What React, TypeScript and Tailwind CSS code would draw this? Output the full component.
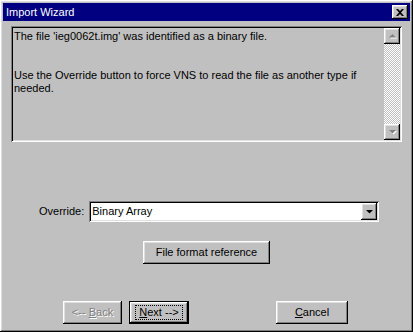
import React from "react";

const raised =
  "shadow-[inset_-1px_-1px_0_#000,inset_1px_1px_0_#fff,inset_-2px_-2px_0_#808080,inset_2px_2px_0_#dfdfdf]";
const sunken =
  "shadow-[inset_1px_1px_0_#808080,inset_-1px_-1px_0_#fff,inset_2px_2px_0_#000,inset_-2px_-2px_0_#dfdfdf]";

function Arrow({ down = false, disabled = false }: { down?: boolean; disabled?: boolean }) {
  const pts = down ? "1,1 8,1 4.5,4.5" : "1,4.5 8,4.5 4.5,1";
  return (
    <svg width="9" height="6" viewBox="0 0 9 6">
      {disabled && (
        <polygon points={pts} fill="#fff" transform="translate(1,1)" />
      )}
      <polygon points={pts} fill={disabled ? "#808080" : "#000"} />
    </svg>
  );
}

function Button({
  children,
  className = "",
  isDefault = false,
  disabled = false,
}: {
  children: React.ReactNode;
  className?: string;
  isDefault?: boolean;
  disabled?: boolean;
}) {
  return (
    <div
      className={`flex items-center justify-center h-[23px] bg-[#c0c0c0] ${
        isDefault ? "border border-black" : ""
      } ${className}`}
    >
      <div className={`flex h-full w-full items-center justify-center ${raised}`}>
        {isDefault ? (
          <span className="border border-dotted border-black px-[3px] leading-[13px]">
            {children}
          </span>
        ) : (
          <span
            className={
              disabled ? "text-[#808080] [text-shadow:1px_1px_0_#fff]" : "text-black"
            }
          >
            {children}
          </span>
        )}
      </div>
    </div>
  );
}

export default function App() {
  return (
    <div className="w-[413px] h-[332px] bg-[#c0c0c0] text-[11px] text-black font-['Liberation_Sans',Arial,sans-serif]">
      <div className={`flex h-full w-full flex-col p-[3px] ${raised}`}>
        {/* title bar */}
        <div className="flex h-[18px] items-center justify-between bg-[#000080] pl-[3px] pr-[2px]">
          <span className="text-white text-[11px] leading-none">Import Wizard</span>
          <div
            className={`flex h-[14px] w-[16px] items-center justify-center bg-[#c0c0c0] ${raised}`}
          >
            <svg width="8" height="7" viewBox="0 0 8 7">
              <path d="M0 0h2l2 2 2-2h2L5 3.5 8 7H6L4 5 2 7H0l3-3.5z" fill="#000" />
            </svg>
          </div>
        </div>

        {/* message box */}
        <div className={`mx-[8px] mt-[5px] flex h-[116px] p-[2px] ${sunken}`}>
          <div className="flex-1 pl-[1px] pt-[2px] leading-[13px]">
            <p>The file 'ieg0062t.img' was identified as a binary file.</p>
            <p className="mt-[26px]">
              Use the Override button to force VNS to read the file as another type if needed.
            </p>
          </div>
          <div className="flex w-[16px] flex-col">
            <div className={`flex h-[16px] items-center justify-center bg-[#c0c0c0] ${raised}`}>
              <Arrow disabled />
            </div>
            <div className="flex-1 bg-[repeating-conic-gradient(#c0c0c0_0%_25%,#fff_0%_50%)] bg-[length:2px_2px]" />
            <div className={`flex h-[16px] items-center justify-center bg-[#c0c0c0] ${raised}`}>
              <Arrow down disabled />
            </div>
          </div>
        </div>

        {/* override */}
        <div className="mt-[59px] flex items-center pl-[36px]">
          <span className="mr-[5px]">Override:</span>
          <div className={`flex h-[21px] w-[290px] items-center bg-white p-[2px] ${sunken}`}>
            <span className="flex-1 pl-[1px]">Binary Array</span>
            <div className={`flex h-[17px] w-[16px] items-center justify-center bg-[#c0c0c0] ${raised}`}>
              <Arrow down />
            </div>
          </div>
        </div>

        <div className="mt-[19px] flex">
          <Button className="ml-[140px] w-[127px]">File format reference</Button>
        </div>

        {/* nav buttons */}
        <div className="mt-[37px] flex">
          <Button className="ml-[60px] w-[59px]" disabled>
            &lt;-- <u>B</u>ack
          </Button>
          <Button className="ml-[7px] w-[60px]" isDefault>
            <u>N</u>ext --&gt;
          </Button>
          <Button className="ml-[87px] w-[72px]">
            <u>C</u>ancel
          </Button>
        </div>
      </div>
    </div>
  );
}
